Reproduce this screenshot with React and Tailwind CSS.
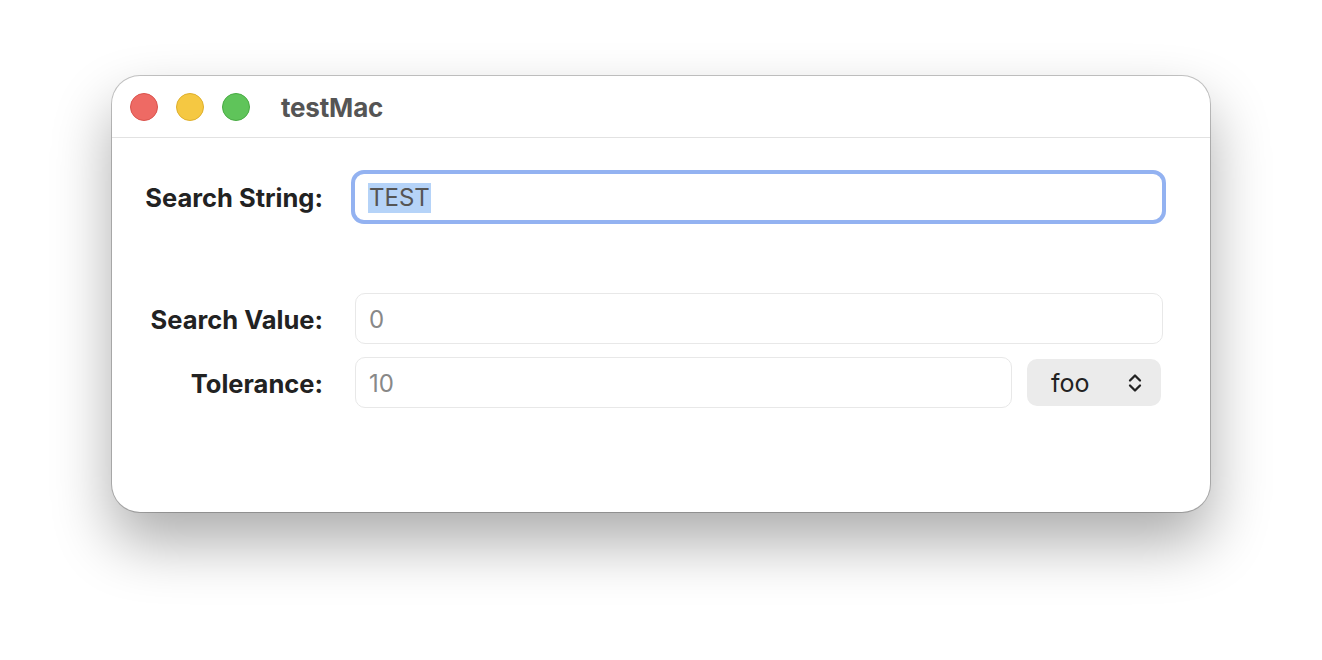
import React from 'react'

function Chevrons() {
  return (
    <svg width="16" height="22" viewBox="0 0 16 22" fill="none" stroke="#222" strokeWidth="2.3" strokeLinecap="round" strokeLinejoin="round">
      <path d="M3 8.5 L8 3.5 L13 8.5" />
      <path d="M3 13.5 L8 18.5 L13 13.5" />
    </svg>
  )
}

function App() {
  return (
    <div className="min-h-screen w-full bg-white pt-[76px] pl-[112px] font-['Inter',sans-serif]">
      {/* ventana */}
      <div className="w-[1098px] h-[436px] bg-white rounded-[28px] overflow-hidden shadow-[0_0_0_1px_rgba(0,0,0,0.22),0_30px_60px_rgba(0,0,0,0.33)]">
        {/* barra de titulo */}
        <div className="h-[62px] flex items-center border-b border-[#e2e2e2] pl-[18px]">
          <div className="flex items-center gap-[18px]">
            <span className="w-[28px] h-[28px] rounded-full bg-[#ee6a64] border border-[#d9524c]" />
            <span className="w-[28px] h-[28px] rounded-full bg-[#f5c842] border border-[#deaf2c]" />
            <span className="w-[28px] h-[28px] rounded-full bg-[#5fc45a] border border-[#48ab43]" />
          </div>
          <span className="ml-[31px] mt-[2px] text-[26px] font-bold text-[#555] tracking-[-0.2px]">testMac</span>
        </div>

        {/* contenido */}
        <div className="pt-[32px]">
          <div className="flex items-center">
            <div className="w-[211px] pt-[2px] text-right text-[25.5px] font-bold text-[#222]">Search String:</div>
            <div className="ml-[28px] w-[815px] h-[54px] rounded-[13px] border-[4px] border-[#93b2f1] flex items-center pl-[13px]">
              <span className="bg-[#b5d3f8] text-[#555] text-[24px] leading-[30px] px-[1px] mt-[2px]">TEST</span>
            </div>
          </div>

          <div className="flex items-center mt-[69px]">
            <div className="w-[211px] pt-[3px] text-right text-[25.5px] font-bold text-[#222]">Search Value:</div>
            <div className="ml-[32px] w-[808px] h-[51px] rounded-[10px] border border-[#e8e8e8] flex items-center pl-[13px] pt-[3px] text-[24px] text-[#888]">0</div>
          </div>

          <div className="flex items-center mt-[13px]">
            <div className="w-[211px] pt-[3px] text-right text-[25.5px] font-bold text-[#222]">Tolerance:</div>
            <div className="ml-[32px] w-[657px] h-[51px] rounded-[10px] border border-[#e8e8e8] flex items-center pl-[13px] pt-[3px] text-[24px] text-[#888]">10</div>
            <div className="ml-[15px] w-[134px] h-[47px] rounded-[10px] bg-[#ebebeb] flex items-center justify-between pl-[24px] pr-[18px]">
              <span className="text-[25px] text-[#222] pt-[3px]">foo</span>
              <Chevrons />
            </div>
          </div>
        </div>
      </div>
    </div>
  )
}

export default App
